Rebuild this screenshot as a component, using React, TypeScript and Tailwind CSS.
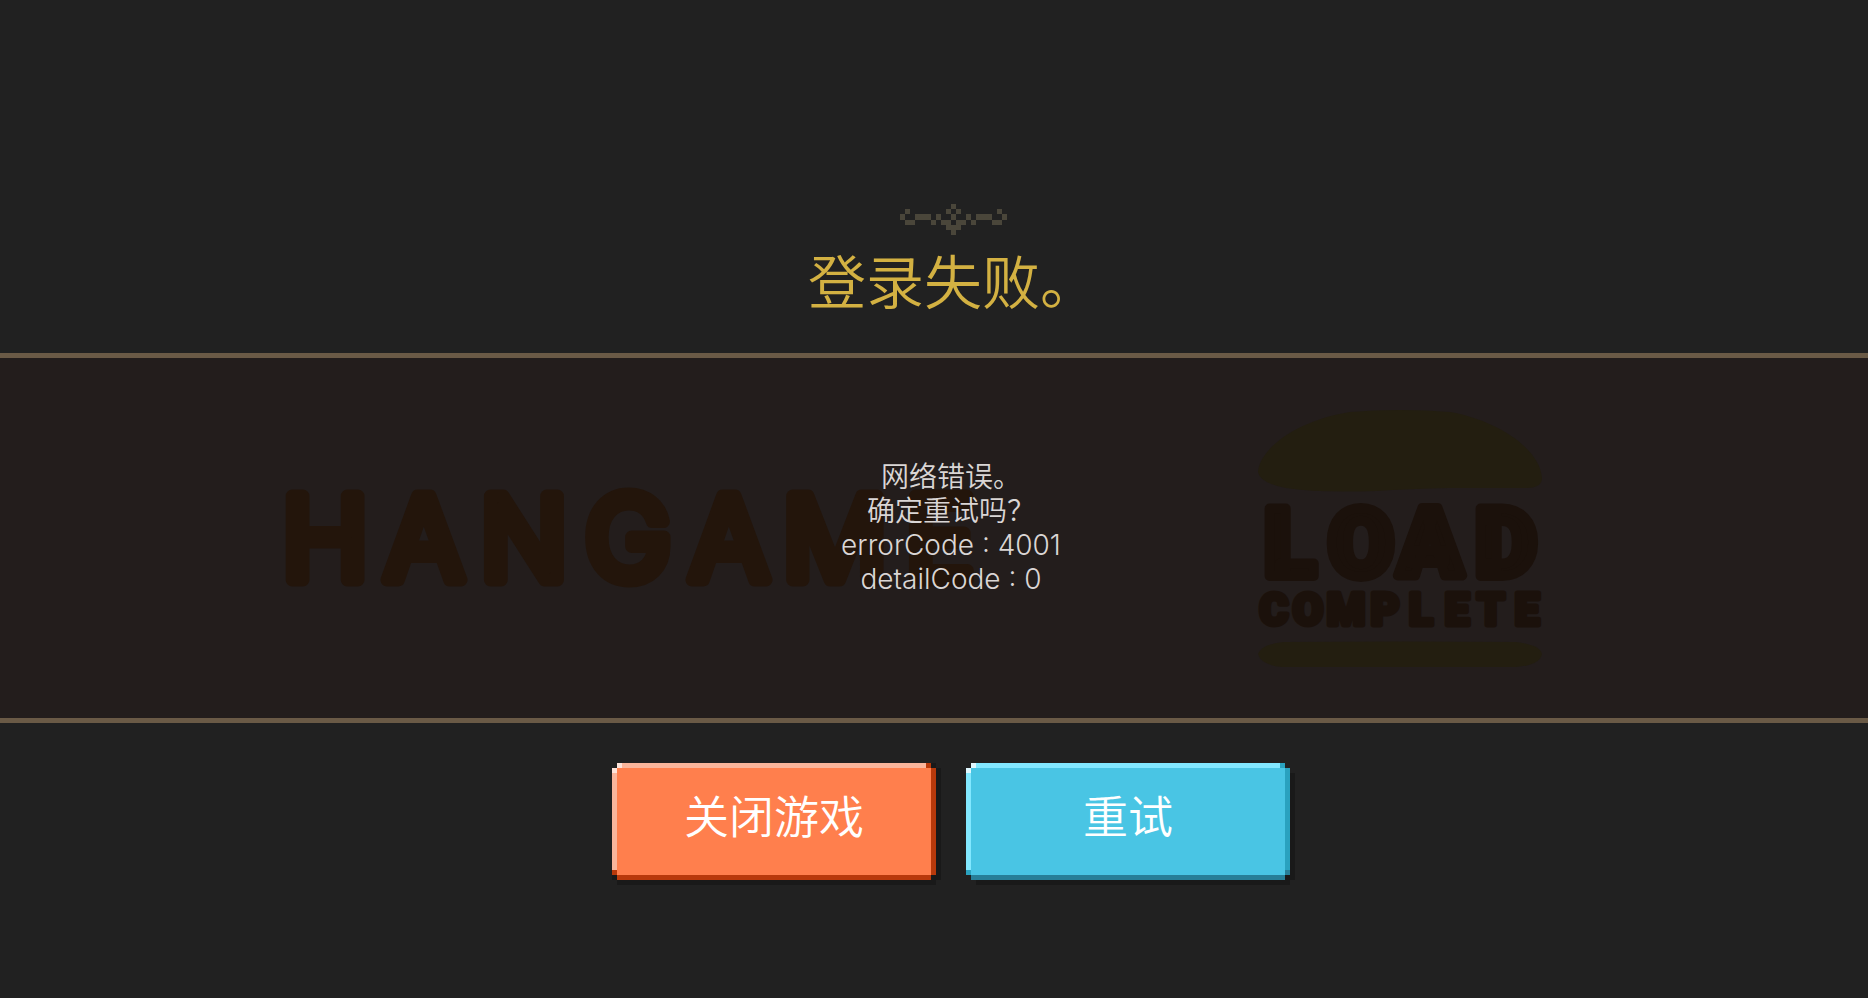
import { clsx } from 'clsx'

type Tone = 'orange' | 'blue'

// One string per pixel row
const ORNAMENT = [
  '..........#..........',
  '.#.......#.#.......#.',
  '#..###.#..#..#.###..#',
  '.##...#.##.##.#...##.',
  '.........###.........',
  '..........#..........',
]

const MESSAGE = ['网络错误。', '确定重试吗？', 'errorCode : 4001', 'detailCode : 0']

const FACE: Record<Tone, string> = {
  orange:
    'bg-[#ff7f4d] shadow-[0_-5px_0_#fab59b,-5px_0_0_#fab59b,5px_0_0_#b8390b,0_5px_0_#b8390b,-5px_5px_0_#191919,5px_-5px_0_#191919,10px_0_0_#191919,0_10px_0_#191919,5px_10px_0_#191919,10px_5px_0_#191919]',
  blue: 'bg-[#49c5e4] shadow-[0_-5px_0_#82e8ff,-5px_0_0_#82e8ff,5px_0_0_#2aa2bf,0_5px_0_#277f98,10px_5px_0_#191919,5px_10px_0_#191919]',
}

const CORNERS: Record<Tone, { light: string; mid: string; dark: string }> = {
  orange: { light: 'bg-[#fde3da]', mid: 'bg-[#b8390b]', dark: 'bg-[#b8390b]' },
  blue: { light: 'bg-[#e0f8ff]', mid: 'bg-[#2aa2bf]', dark: 'bg-[#277f98]' },
}

export default function App() {
  return (
    <main className="min-h-screen bg-[#212121] pt-[204px] pb-[112px] font-['Inter','Noto_Sans_CJK_SC',sans-serif] font-[350]">
      <header className="flex flex-col items-center pb-[38px] pl-[38px]">
        <Ornament />
        <h1 className="mt-4 text-[58px] leading-[64px] text-[#d3b142]">登录失败。</h1>
      </header>

      <section className="relative flex h-[370px] items-center justify-center border-y-[5px] border-[#6a5a46] bg-[#231d1c] pb-5 pl-[34px]">
        {/* Splash logos, dimmed behind the message */}
        <div className="absolute inset-0 flex items-center justify-between pl-[15.2%] pr-[17.4%]">
          <HangameLogo />
          <LoadCompleteLogo />
        </div>
        <div className="relative text-center text-[28px] leading-[34px] text-[#dad6d5]">
          {MESSAGE.map((line) => (
            <p key={line}>{line}</p>
          ))}
        </div>
      </section>

      <div className="flex flex-wrap justify-center gap-10 pt-[45px] pl-[34px]">
        <PixelButton tone="orange">关闭游戏</PixelButton>
        <PixelButton tone="blue">重试</PixelButton>
      </div>
    </main>
  )
}

function PixelButton({ tone, children }: { tone: Tone; children: string }) {
  const corner = CORNERS[tone]
  return (
    <button
      type="button"
      className={clsx(
        'relative h-[107px] w-[314px] cursor-pointer pb-2 text-[45px] leading-[64px] text-white',
        FACE[tone],
      )}
    >
      <span className={clsx('absolute -top-[5px] left-0 size-[5px]', corner.light)} />
      <span className={clsx('absolute top-0 -left-[5px] size-[5px]', corner.light)} />
      <span className={clsx('absolute -top-[5px] right-0 size-[5px]', corner.mid)} />
      <span className={clsx('absolute bottom-0 -left-[5px] size-[5px]', corner.mid)} />
      <span className={clsx('absolute -right-[5px] bottom-0 size-[5px]', corner.dark)} />
      {children}
    </button>
  )
}

function Ornament() {
  return (
    <svg
      className="h-[31px] w-[107px]"
      viewBox="0 0 21 6"
      preserveAspectRatio="none"
      shapeRendering="crispEdges"
      fill="#4a463a"
      aria-hidden="true"
    >
      {ORNAMENT.map((row, y) =>
        [...row].map((cell, x) =>
          cell === '#' ? <rect key={`${x}-${y}`} x={x} y={y} width="1" height="1" /> : null,
        ),
      )}
    </svg>
  )
}

function HangameLogo() {
  return (
    <svg className="h-[98px] w-[692px] overflow-visible" viewBox="0 0 692 98" role="img" aria-label="Hangame">
      <text
        x="41 140 240 344 445 551 656"
        y="91"
        textAnchor="middle"
        fill="#23150b"
        stroke="#23150b"
        strokeWidth="13"
        strokeLinejoin="round"
        className="font-['Inter',sans-serif] text-[116px] font-normal"
      >
        HANGAME
      </text>
    </svg>
  )
}

function LoadCompleteLogo() {
  return (
    <svg className="h-[257px] w-[285px] overflow-visible" viewBox="0 0 285 257" role="img" aria-label="Load Complete">
      <g fill="#231e10">
        <path d="M0 62C2 38 40 10 92 2Q142 -2 192 2C238 10 282 38 284 68Q284 78 268 78L190 78Q150 79 118 81Q60 83 28 78Q2 73 0 62Z" />
        <path d="M0 244Q4 234 26 232Q142 231 258 232Q282 235 284 244Q282 255 258 257H24Q3 255 0 244Z" />
      </g>
      <g
        fill="#1b110b"
        stroke="#1b110b"
        strokeLinejoin="round"
        textAnchor="middle"
        className="font-['Roboto',sans-serif] font-black"
      >
        <text x="32 103 172 248" y="166" strokeWidth="10" className="text-[94px]">
          LOAD
        </text>
        <text x="16 50 88 127 163 199 233 269" y="215" strokeWidth="5" className="text-[44px]">
          COMPLETE
        </text>
      </g>
    </svg>
  )
}
